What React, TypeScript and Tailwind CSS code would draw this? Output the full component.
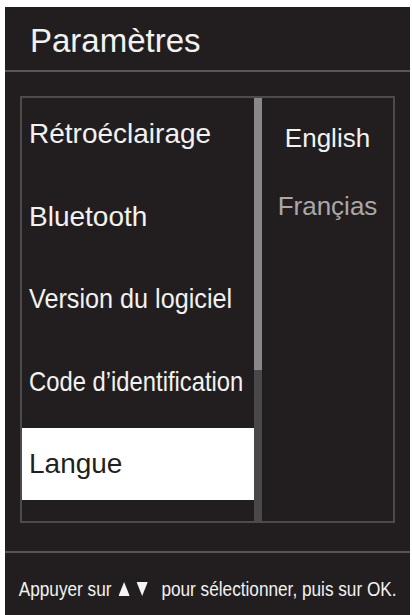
import React from "react";

const items = [
  { label: "Rétroéclairage", scale: "" },
  { label: "Bluetooth", scale: "" },
  { label: "Version du logiciel", scale: "scale-x-[0.9]" },
  { label: "Code d’identification", scale: "scale-x-[0.85]" },
  { label: "Langue", scale: "", selected: true },
];

function Up() {
  return (
    <svg width="13" height="14" viewBox="0 0 13 14" className="inline-block">
      <polygon points="6.5,0 13,14 0,14" fill="#f4f4f4" />
    </svg>
  );
}
function Down() {
  return (
    <svg width="13" height="14" viewBox="0 0 13 14" className="inline-block">
      <polygon points="0,0 13,0 6.5,14" fill="#f4f4f4" />
    </svg>
  );
}

export default function App() {
  return (
    <div className="w-[412px] h-[615px] bg-white overflow-hidden" style={{ fontFamily: '"Liberation Sans", Arial, sans-serif' }}>
      <div className="ml-[5px] mt-[7px] w-[405px] h-[608px] bg-[#221e1f] flex flex-col">
        <div className="h-[63px] pl-[25px] pt-[9px] text-[33px] text-[#f2f2f2] leading-normal">Paramètres</div>
        <div className="h-[2px] bg-[#575556]" />
        <div className="pt-[24px] px-[15px]">
          <div className="h-[427px] border-2 border-[#4c4a4b] flex">
            <div className="w-[232px] flex flex-col gap-[10.5px]">
              {items.map((it) => (
                <div
                  key={it.label}
                  className={`h-[72px] flex items-center pl-[7px] text-[28px] whitespace-nowrap ${it.selected ? "bg-white text-[#231f20]" : "text-[#f2f2f2]"}`}
                >
                  <span className={`inline-block origin-left ${it.scale}`}>{it.label}</span>
                </div>
              ))}
            </div>
            <div className="w-[8px] bg-[#4a4849] flex flex-col">
              <div className="h-[272px] bg-[#8a8889]" />
            </div>
            <div className="flex-1 flex flex-col items-center pt-[21px] gap-[29px] text-[26px] leading-normal">
              <div className="text-[#f2f2f2]">English</div>
              <div className="text-[#a9a7a8]">Françias</div>
            </div>
          </div>
        </div>
        <div className="mt-[28px] h-[2px] bg-[#575556]" />
        <div className="pt-[21px] flex justify-center text-[20px] leading-normal text-[#f2f2f2] whitespace-nowrap">
          <span className="inline-flex items-center scale-x-[0.86] origin-center">
            <span>Appuyer sur</span>
            <span className="ml-[8px] inline-flex items-center gap-[8px]"><Up /><Down /></span>
            <span className="ml-[16px]">pour sélectionner, puis sur OK.</span>
          </span>
        </div>
      </div>
    </div>
  );
}
